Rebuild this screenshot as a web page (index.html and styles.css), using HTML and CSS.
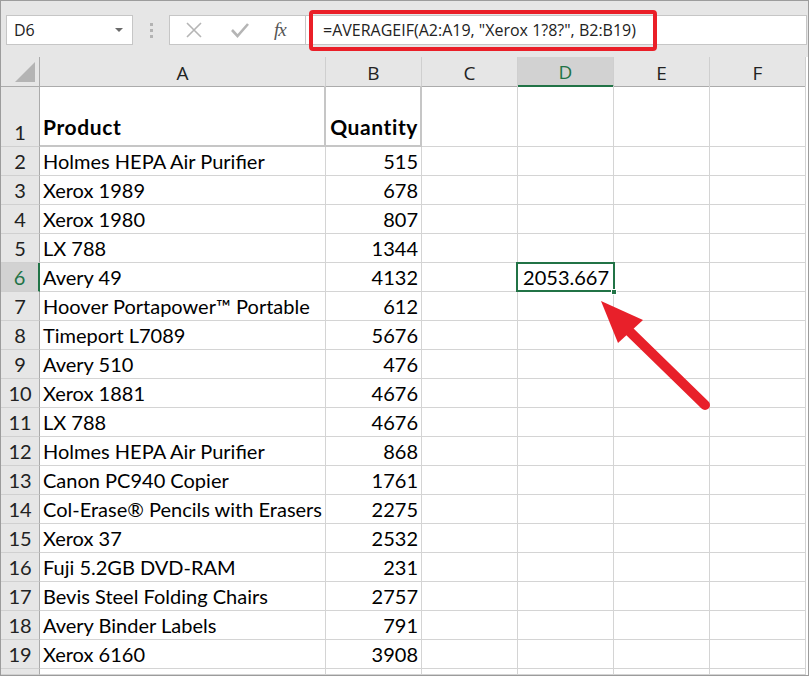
FILE: index.html
```
<!DOCTYPE html>
<html>
<head>
<meta charset="utf-8">
<link rel="stylesheet" href="styles.css">
</head>
<body>
<div class="app">
  <div class="toolbar">
    <div class="namebox"><span>D6</span><span class="caret"></span></div>
    <div class="grip"><i></i><i></i><i></i></div>
    <div class="fnbox">
      <svg class="ico" width="18" height="18" viewBox="0 0 18 18"><path d="M2 2 L16 16 M16 2 L2 16" stroke="#b5b5b5" stroke-width="1.6" fill="none"/></svg>
      <svg class="ico" width="20" height="18" viewBox="0 0 20 18"><path d="M2 9 L7.5 15 L18 3" stroke="#b5b5b5" stroke-width="2.6" fill="none"/></svg>
      <span class="fx">fx</span>
    </div>
    <div class="formula">=AVERAGEIF(A2:A19, "Xerox 1?8?", B2:B19)</div>
    <div class="highlight"></div>
  </div>
  <div class="sheet">
    <div class="row head">
      <div class="corner"><span class="tri"></span></div>
      <div class="ch">A</div><div class="ch">B</div><div class="ch">C</div><div class="ch sel">D</div><div class="ch">E</div><div class="ch">F</div>
    </div>
    <div class="row tall">
      <div class="rh">1</div><div class="c b hd">Product</div><div class="c b hd num">Quantity</div><div class="c"></div><div class="c"></div><div class="c"></div><div class="c"></div>
    </div>
    <div class="row"><div class="rh">2</div><div class="c">Holmes HEPA Air Purifier</div><div class="c num">515</div><div class="c"></div><div class="c"></div><div class="c"></div><div class="c"></div></div>
    <div class="row"><div class="rh">3</div><div class="c">Xerox 1989</div><div class="c num">678</div><div class="c"></div><div class="c"></div><div class="c"></div><div class="c"></div></div>
    <div class="row"><div class="rh">4</div><div class="c">Xerox 1980</div><div class="c num">807</div><div class="c"></div><div class="c"></div><div class="c"></div><div class="c"></div></div>
    <div class="row"><div class="rh">5</div><div class="c">LX 788</div><div class="c num">1344</div><div class="c"></div><div class="c"></div><div class="c"></div><div class="c"></div></div>
    <div class="row"><div class="rh rsel">6</div><div class="c">Avery 49</div><div class="c num">4132</div><div class="c"></div><div class="c num active">2053.667<span class="handle"></span></div><div class="c"></div><div class="c"></div></div>
    <div class="row"><div class="rh">7</div><div class="c">Hoover Portapower™ Portable</div><div class="c num">612</div><div class="c"></div><div class="c"></div><div class="c"></div><div class="c"></div></div>
    <div class="row"><div class="rh">8</div><div class="c">Timeport L7089</div><div class="c num">5676</div><div class="c"></div><div class="c"></div><div class="c"></div><div class="c"></div></div>
    <div class="row"><div class="rh">9</div><div class="c">Avery 510</div><div class="c num">476</div><div class="c"></div><div class="c"></div><div class="c"></div><div class="c"></div></div>
    <div class="row"><div class="rh">10</div><div class="c">Xerox 1881</div><div class="c num">4676</div><div class="c"></div><div class="c"></div><div class="c"></div><div class="c"></div></div>
    <div class="row"><div class="rh">11</div><div class="c">LX 788</div><div class="c num">4676</div><div class="c"></div><div class="c"></div><div class="c"></div><div class="c"></div></div>
    <div class="row"><div class="rh">12</div><div class="c">Holmes HEPA Air Purifier</div><div class="c num">868</div><div class="c"></div><div class="c"></div><div class="c"></div><div class="c"></div></div>
    <div class="row"><div class="rh">13</div><div class="c">Canon PC940 Copier</div><div class="c num">1761</div><div class="c"></div><div class="c"></div><div class="c"></div><div class="c"></div></div>
    <div class="row"><div class="rh">14</div><div class="c">Col-Erase® Pencils with Erasers</div><div class="c num">2275</div><div class="c"></div><div class="c"></div><div class="c"></div><div class="c"></div></div>
    <div class="row"><div class="rh">15</div><div class="c">Xerox 37</div><div class="c num">2532</div><div class="c"></div><div class="c"></div><div class="c"></div><div class="c"></div></div>
    <div class="row"><div class="rh">16</div><div class="c">Fuji 5.2GB DVD-RAM</div><div class="c num">231</div><div class="c"></div><div class="c"></div><div class="c"></div><div class="c"></div></div>
    <div class="row"><div class="rh">17</div><div class="c">Bevis Steel Folding Chairs</div><div class="c num">2757</div><div class="c"></div><div class="c"></div><div class="c"></div><div class="c"></div></div>
    <div class="row"><div class="rh">18</div><div class="c">Avery Binder Labels</div><div class="c num">791</div><div class="c"></div><div class="c"></div><div class="c"></div><div class="c"></div></div>
    <div class="row"><div class="rh">19</div><div class="c">Xerox 6160</div><div class="c num">3908</div><div class="c"></div><div class="c"></div><div class="c"></div><div class="c"></div></div>
    <div class="row part"><div class="rh"></div><div class="c"></div><div class="c"></div><div class="c"></div><div class="c"></div><div class="c"></div><div class="c"></div></div>
  </div>
  <svg class="arrow" width="808" height="676" viewBox="0 0 808 676">
    <line x1="626" y1="328" x2="704" y2="404" stroke="#e8202a" stroke-width="10" stroke-linecap="round"/>
    <polygon points="600,300 642,319 617,342" fill="#e8202a"/>
  </svg>
</div>
</body>
</html>
```
FILE: styles.css
```
* { box-sizing: border-box; }
html, body { margin: 0; padding: 0; background: #fff; }
.app {
  position: relative;
  width: 809px;
  height: 676px;
  border: 1px solid #9c9c9c;
  background: #fff;
  overflow: hidden;
  font-family: "Open Sans", "Noto Sans", sans-serif;
}
.toolbar {
  height: 56px;
  background: #e6e6e6;
  display: flex;
  align-items: flex-start;
  padding: 14px 0 0 5px;
}
.namebox {
  width: 127px;
  height: 30px;
  background: #fff;
  border: 1px solid #c6c6c6;
  display: flex;
  align-items: center;
  justify-content: space-between;
  padding: 0 9px 0 7px;
  font-size: 16px;
  color: #222;
}
.caret {
  width: 0; height: 0;
  border-left: 4px solid transparent;
  border-right: 4px solid transparent;
  border-top: 4px solid #6a6a6a;
}
.grip {
  margin: 8px 16px 0 17px;
  display: flex;
  flex-direction: column;
  gap: 3px;
}
.grip i { display: block; width: 3px; height: 3px; background: #b3b3b3; }
.fnbox {
  width: 137px;
  height: 30px;
  background: #fff;
  border: 1px solid #c6c6c6;
  display: flex;
  align-items: center;
  padding-left: 15px;
}
.fnbox .ico:first-child { margin-right: 27px; }
.fnbox .ico:nth-child(2) { margin-right: 24px; }
.fx {
  font-family: "Liberation Serif", "DejaVu Serif", serif;
  font-style: italic;
  font-size: 19px;
  color: #555;
  letter-spacing: -1px;
}
.formula {
  flex: 1;
  height: 30px;
  background: #fff;
  border: 1px solid #c6c6c6;
  border-left: none;
  margin-right: 1px;
  display: flex;
  align-items: center;
  padding-left: 17px;
  font-size: 16px;
  color: #222;
  white-space: nowrap;
}
.highlight {
  position: absolute;
  left: 308px;
  top: 9px;
  width: 348px;
  height: 41px;
  border: 4px solid #ea1f28;
  border-radius: 4px;
}
.sheet { width: 805px; }
.row {
  display: grid;
  grid-template-columns: 39px 286px repeat(5, 96px);
  height: 29px;
}
.row.tall { height: 61px; }
.row.part { height: 6px; }
.corner {
  background: #e6e6e6;
  border-right: 1px solid #ababab;
  border-bottom: 1px solid #ababab;
  position: relative;
}
.tri {
  position: absolute;
  right: 4px;
  bottom: 4px;
  width: 0; height: 0;
  border-left: 20px solid transparent;
  border-bottom: 20px solid #b4b4b4;
}
.ch {
  background: #e6e6e6;
  border-right: 1px solid #cfcfcf;
  border-bottom: 1px solid #ababab;
  display: flex;
  align-items: center;
  justify-content: center;
  font-size: 19px;
  color: #222;
  padding-top: 2px;
}
.ch.sel {
  background: #d2d2d2;
  color: #217346;
  border-bottom: 2px solid #217346;
}
.rh {
  background: #e6e6e6;
  border-right: 1px solid #ababab;
  border-bottom: 1px solid #d0d0d0;
  display: flex;
  align-items: flex-end;
  justify-content: center;
  font-family: "Lato", "Carlito", sans-serif;
  font-size: 20px;
  line-height: 24px;
  padding-bottom: 2px;
  color: #222;
}
.rh.rsel {
  background: #d2d2d2;
  color: #217346;
  border-right: 2px solid #217346;
}
.c {
  border-right: 1px solid #d4d4d4;
  border-bottom: 1px solid #d4d4d4;
  display: flex;
  align-items: flex-end;
  font-family: "Lato", "Carlito", sans-serif;
  font-size: 20px;
  line-height: 24px;
  padding: 0 3px 2px 3px;
  color: #000;
  white-space: nowrap;
}
.c.num { justify-content: flex-end; }
.c.b { font-weight: bold; font-size: 21px; letter-spacing: 0.6px; padding-bottom: 6px; padding-right: 2px; }
.c.hd {
  border-right: 2px solid #c6c6c6;
  border-bottom: 2px solid #c6c6c6;
}
.c.active { position: relative; padding-right: 4px; color: #000; }
.c.active::after {
  content: "";
  position: absolute;
  left: -2px; top: -1px; right: -2px; bottom: -1px;
  border: 2px solid #217346;
}
.handle {
  position: absolute;
  right: -4px;
  bottom: -4px;
  width: 6px; height: 6px;
  background: #217346;
  border: 1px solid #fff;
  z-index: 2;
}
.arrow {
  position: absolute;
  left: 0; top: 0;
  pointer-events: none;
}
```
